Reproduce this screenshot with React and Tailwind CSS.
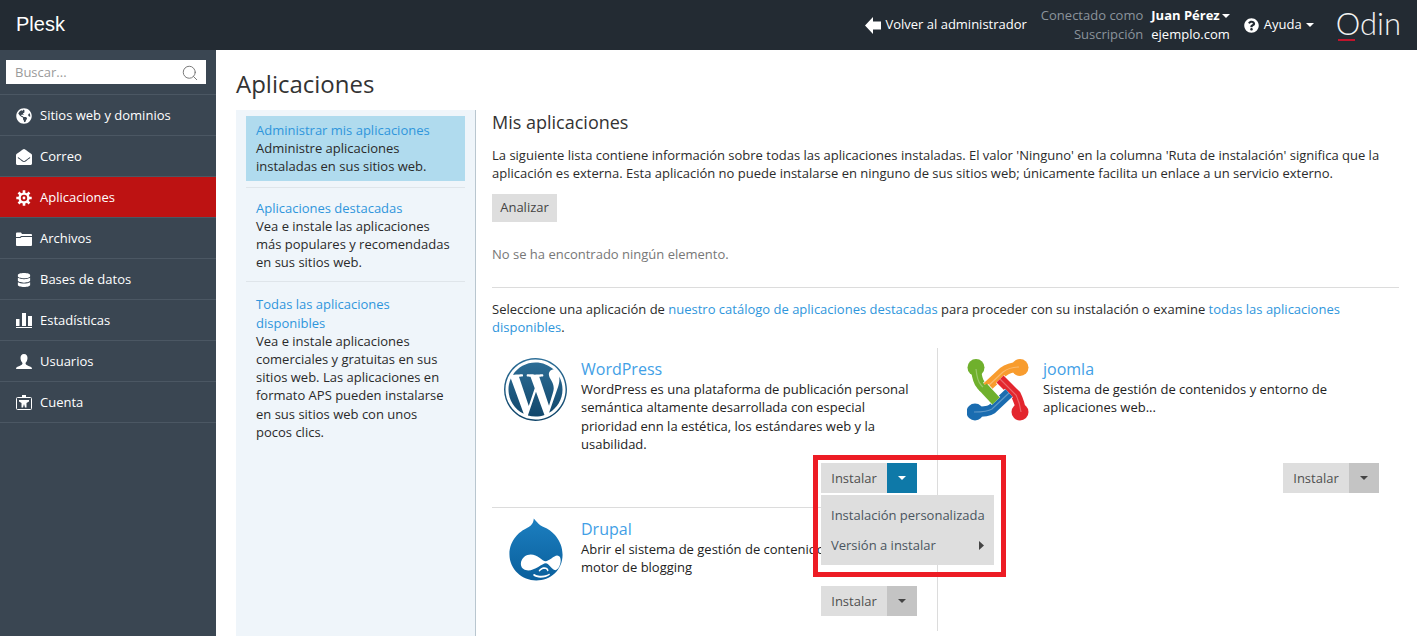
import React from 'react';
import { FaGlobeAmericas, FaEnvelopeOpen, FaDatabase, FaQuestionCircle, FaWordpress, FaDrupal } from 'react-icons/fa';
import { Search } from 'lucide-react';

const Caret = ({ className = '' }) => (
  <svg viewBox="0 0 8 4" className={`w-2 h-1 shrink-0 ${className}`} fill="currentColor">
    <path d="M0 0h8L4 4z" />
  </svg>
);

const GearIcon = () => (
  <svg viewBox="0 0 16 16" className="w-4 h-4" fill="none" stroke="white">
    <circle cx="8" cy="8" r="4.4" strokeWidth="2.4" />
    <circle cx="8" cy="8" r="1.400" fill="white" stroke="none" />
    <path d="M8 0.300v3M8 12.700v3M0.300 8h3M12.700 8h3M2.500 2.500l2.200 2.200M11.300 11.300l2.200 2.200M13.500 2.500l-2.200 2.200M4.700 11.300l-2.200 2.200" strokeWidth="2.600" />
  </svg>
);

const FolderIcon = () => (
  <svg viewBox="0 0 16 14" className="w-4 h-[14px]" fill="white">
    <path d="M0 1.500Q0 .5 1 .5h4l1 1.500h9q1 0 1 1V4H5L4 5H0z" />
    <path d="M0 6h4.500l1-1H16v8q0 1-1 1H1q-1 0-1-1z" />
  </svg>
);

const BarsIcon = () => (
  <svg viewBox="0 0 16 15" className="w-4 h-[15px]" fill="white">
    <rect x="0" y="6" width="3.500" height="7" />
    <rect x="6" y="0" width="4" height="13" />
    <rect x="12" y="3" width="4" height="10" />
    <rect x="0" y="14" width="16" height="1" />
  </svg>
);

const UserIcon = () => (
  <svg viewBox="0 0 16 15" className="w-4 h-[15px]" fill="white">
    <path d="M8 0c2.500 0 3.500 2 3.500 4s-1 4-2 5c0 1.500 1 2 3 3 2 .7 3.500 1 3.500 3H0c0-2 1.500-2.300 3.500-3 2-1 3-1.500 3-3-1-1-2-3-2-5S5.500 0 8 0z" />
  </svg>
);

const BadgeIcon = () => (
  <svg viewBox="0 0 16 15" className="w-4 h-[15px]" fill="none" stroke="white">
    <rect x="0.500" y="2.500" width="15" height="12" rx="1" />
    <rect x="6" y="0" width="4" height="3" fill="white" stroke="none" />
    <path d="M3 5h10v1.500L10.500 8v4.500H9L8 9l-1 3.500H5.500V8L3 6.500z" fill="white" stroke="none" />
  </svg>
);

const BackArrow = () => (
  <svg viewBox="0 0 16 17" className="w-4 h-[17px]" fill="white">
    <path d="M0 8.500L8 0v4.500h8v8H8V17z" />
  </svg>
);

const navItems = [
  { label: 'Sitios web y dominios', icon: <FaGlobeAmericas className="w-4 h-4" /> },
  { label: 'Correo', icon: <FaEnvelopeOpen className="w-4 h-4" /> },
  { label: 'Aplicaciones', icon: <GearIcon />, active: true },
  { label: 'Archivos', icon: <FolderIcon /> },
  { label: 'Bases de datos', icon: <FaDatabase className="w-[14px] h-[14px]" /> },
  { label: 'Estadísticas', icon: <BarsIcon /> },
  { label: 'Usuarios', icon: <UserIcon /> },
  { label: 'Cuenta', icon: <BadgeIcon /> },
];

const JoomlaArm = ({ d, color, ball }) => (
  <g fill="none">
    <path d={d} stroke="white" strokeWidth="11.500" />
    <path d={d} stroke={color} strokeWidth="10" />
    <circle cx={ball[0]} cy={ball[1]} r="8.500" fill={color} />
    <path d={d} stroke="white" strokeOpacity="0.3" strokeWidth="1.200" />
  </g>
);

const JoomlaLogo = () => (
  <svg viewBox="0 0 62 62" className="w-[62px] h-[62px]">
    <JoomlaArm d="M9 10C10 20 12 24 14 26L29 42" color="#6fb02c" ball={[9, 8.500]} />
    <JoomlaArm d="M52 8C44 8 40 10 36 13L20 28" color="#f89c2e" ball={[53, 8.500]} />
    <JoomlaArm d="M54 53C53 44 51 40 49 36L33 20" color="#e3262e" ball={[53, 53]} />
    <JoomlaArm d="M7 53C16 53 22 52 25 50L42 34" color="#1a6cb0" ball={[8, 53]} />
    <path d="M17 29L29 42" fill="none" stroke="white" strokeWidth="11.500" />
    <path d="M16 28L29 42" fill="none" stroke="#6fb02c" strokeWidth="10" />
  </svg>
);

const InstallButton = ({ open }) => (
  <div className="flex h-[30px] text-[13px] text-[#4f4f4f]">
    <div className="w-[66px] bg-[#dedede] flex items-center justify-center pt-[1px]">Instalar</div>
    <div className={`w-[30px] flex items-center justify-center ${open ? 'bg-[#0e79a8] text-white' : 'bg-[#c4c4c4] text-[#444]'}`}>
      <Caret />
    </div>
  </div>
);

const AppCard = ({ logo, name, children, className = '' }) => (
  <div className={`flex ${className}`}>
    <div className="w-[89px] h-[60px] shrink-0 pl-[13px] pt-[11px]">{logo}</div>
    <div className="flex-1 pt-[11px] pr-[20px]">
      <div className="text-[16px] leading-[20px] text-[#42a0e6]">{name}</div>
      <div className="text-[13px] leading-[18.330px] text-[#222] mt-[1px]">{children}</div>
    </div>
  </div>
);

const SideLink = ({ title, text, active, className = '' }) => (
  <div className={`text-[13px] leading-[18.200px] w-[219px] ${className}`}>
    <div className={`px-[10px] ${active ? 'bg-[#b0dbee] py-[5px]' : ''}`}>
      <div className="text-[#2f96dc]">{title}</div>
      <div className="text-[#2a2a2a]">{text}</div>
    </div>
  </div>
);

export default function App() {
  return (
    <div className="h-[636px] overflow-hidden bg-white font-['Open_Sans',sans-serif] relative">
      <svg width="0" height="0" className="absolute">
        <defs>
          <linearGradient id="wpGrad" x1="0" y1="0" x2="0" y2="1">
            <stop offset="0" stopColor="#2f7099" />
            <stop offset="1" stopColor="#0f4468" />
          </linearGradient>
          <linearGradient id="drupalGrad" x1="0" y1="0" x2="0" y2="1">
            <stop offset="0" stopColor="#1c7fc0" />
            <stop offset="1" stopColor="#0a5f9c" />
          </linearGradient>
        </defs>
      </svg>

      <header className="h-[50px] bg-[#232b33] flex items-center text-white text-[13px]">
        <div className="pl-4 text-[20px] font-['Liberation_Sans',sans-serif] leading-none -mt-[2px]">Plesk</div>
        <div className="ml-auto flex items-center pr-[16px]">
          <div className="flex items-center gap-[4px] mr-[14px]">
            <BackArrow />
            <span>Volver al administrador</span>
          </div>
          <div className="grid grid-cols-[auto_auto] gap-x-[8px] leading-[19px] mr-[14px]">
            <span className="text-right text-[#8b949c]">Conectado como</span>
            <span className="font-bold flex items-center gap-[2px]">Juan Pérez<Caret /></span>
            <span className="text-right text-[#8b949c]">Suscripción</span>
            <span>ejemplo.com</span>
          </div>
          <div className="flex items-center gap-[5px] mr-[22px]">
            <FaQuestionCircle className="w-[15px] h-[15px]" />
            <span className="flex items-center gap-[4px]">Ayuda<Caret /></span>
          </div>
          <div className="relative text-[31px] leading-none font-['Lato',sans-serif] font-light text-[#f2f2f2] -mt-[3px]">
            Odin
            <div className="absolute left-[2px] -bottom-[2px] w-[17px] h-[2px] bg-[#c0142c]" />
          </div>
        </div>
      </header>

      <div className="flex h-[586px]">
        <aside className="w-[216px] shrink-0 bg-[#3a4652] text-white text-[13px]">
          <div className="h-[44px] pl-[6px] pr-[10px] pt-[10px]">
            <div className="h-[24px] bg-white flex items-center justify-between pl-[9px] pr-[7px] text-[#9a9a9a] pt-[1px]">
              <span>Buscar...</span>
              <Search className="w-[18px] h-[18px] text-[#777]" strokeWidth={1.300} />
            </div>
          </div>
          {navItems.map((item) => (
            <div key={item.label} className="h-[41px] border-t border-[#4b5763]">
              <div className={`h-[40px] flex items-center pt-[1px] ${item.active ? 'bg-[#bd1212]' : ''}`}>
                <div className="w-[16px] ml-[16px] mr-[8px] flex justify-center">{item.icon}</div>
                <span>{item.label}</span>
              </div>
            </div>
          ))}
          <div className="border-t border-[#4b5763]" />
        </aside>

        <main className="flex-1 min-w-0 pl-5 pr-[18px]">
          <h1 className="text-[24px] leading-[33px] text-[#333] pt-[17px] h-[60px]">Aplicaciones</h1>
          <div className="flex h-[526px]">
            <nav className="w-[240px] shrink-0 bg-[#eff5fa] border-r border-[#b9c6cf] px-[10px] pt-[6px]">
              <SideLink active title="Administrar mis aplicaciones" text="Administre aplicaciones instaladas en sus sitios web." className="border-b border-[#dfe5ea] pb-[6px]" />
              <SideLink title="Aplicaciones destacadas" text="Vea e instale las aplicaciones más populares y recomendadas en sus sitios web." className="border-b border-[#dfe5ea] pt-[11px] pb-[10px]" />
              <SideLink title="Todas las aplicaciones disponibles" text="Vea e instale aplicaciones comerciales y gratuitas en sus sitios web. Las aplicaciones en formato APS pueden instalarse en sus sitios web con unos pocos clics." className="pt-[13px]" />
            </nav>

            <section className="flex-1 min-w-0 pl-[16px] text-[13px] text-[#2b2b2b]">
              <h2 className="text-[18px] leading-[25px] text-[#333]">Mis aplicaciones</h2>
              <p className="leading-[18px] mt-[11px]">La siguiente lista contiene información sobre todas las aplicaciones instaladas. El valor 'Ninguno' en la columna 'Ruta de instalación' significa que la aplicación es externa. Esta aplicación no puede instalarse en ninguno de sus sitios web; únicamente facilita un enlace a un servicio externo.</p>
              <button className="block mt-[12px] h-[28px] w-[65px] bg-[#dedede] text-[#444]">Analizar</button>
              <p className="mt-[23px] text-[#777] leading-[18px] pb-[24px] border-b border-[#dcdcdc]">No se ha encontrado ningún elemento.</p>
              <p className="leading-[18px] mt-[12px]">
                Seleccione una aplicación de <span className="text-[#2f96dc]">nuestro catálogo de aplicaciones destacadas</span> para proceder con su instalación o examine <span className="text-[#2f96dc]">todas las aplicaciones disponibles</span>.
              </p>

              <div className="grid grid-cols-[446px_1fr] mt-[12px]">
                <div className="h-[160px] border-r border-b border-[#dcdcdc] relative">
                  <AppCard name="WordPress" logo={<FaWordpress className="w-[65px] h-[65px] -ml-[2px] -mt-[2px] [fill:url(#wpGrad)]" />}>
                    WordPress es una plataforma de publicación personal semántica altamente desarrollada con especial prioridad enn la estética, los estándares web y la usabilidad.
                  </AppCard>
                  <div className="absolute left-[329px] top-[115px]"><InstallButton open /></div>
                </div>
                <div className="h-[160px] relative">
                  <AppCard name="joomla" logo={<JoomlaLogo />} className="pl-[16px]">
                    Sistema de gestión de contenidos y entorno de aplicaciones web...
                  </AppCard>
                  <div className="absolute right-[20px] top-[115px]"><InstallButton /></div>
                </div>
                <div className="h-[123px] border-r border-[#dcdcdc] relative">
                  <AppCard name="Drupal" logo={<FaDrupal className="w-[62px] h-[71px] -mt-[5px] [fill:url(#drupalGrad)]" />}>
                    Abrir el sistema de gestión de contenidos y<br />motor de blogging
                  </AppCard>
                  <div className="absolute left-[329px] top-[78px]"><InstallButton /></div>
                </div>
                <div />
              </div>
            </section>
          </div>
        </main>
      </div>

      <div className="absolute left-[821px] top-[495px] w-[173px] h-[70px] bg-[#dedede] text-[13px] text-[#4a5560] px-[10px] pt-[5px] leading-[30px]">
        <div className="whitespace-nowrap">Instalación personalizada</div>
        <div className="flex items-center justify-between">
          <span>Versión a instalar</span>
          <svg viewBox="0 0 5 9" className="w-[5px] h-[9px] text-[#444]" fill="currentColor"><path d="M0 0l5 4.500L0 9z" /></svg>
        </div>
      </div>
      <div className="absolute left-[813px] top-[455px] w-[193px] h-[122px] border-[5px] border-[#ed1c24]" />
    </div>
  );
}
